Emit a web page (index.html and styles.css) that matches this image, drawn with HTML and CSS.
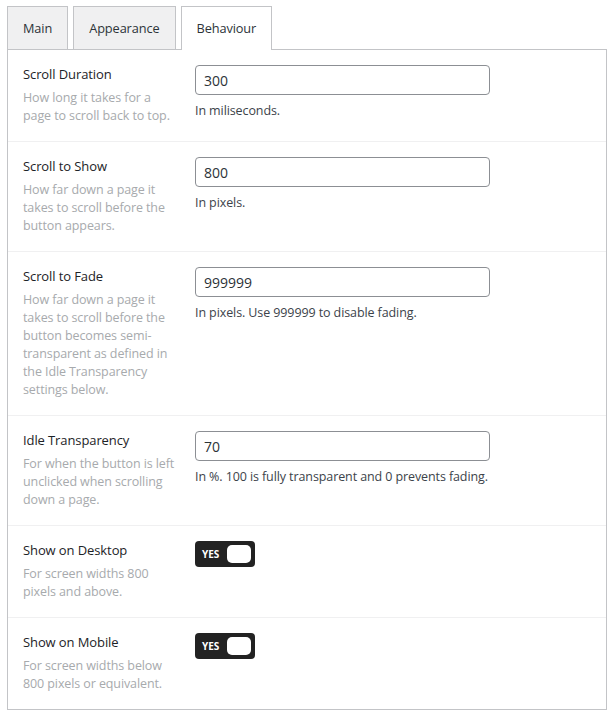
FILE: index.html
```html
<!doctype html>
<html lang="en">
<head>
    <meta charset="UTF-8">
    <title>Behaviour settings</title>
    <link rel="stylesheet" href="styles.css">
</head>
<body>
    <div class="wrap">
        <div class="tabs">
            <a class="tab">Main</a>
            <a class="tab">Appearance</a>
            <a class="tab active">Behaviour</a>
        </div>

        <div class="panel">
            <div class="row">
                <div class="info">
                    <div class="label">Scroll Duration</div>
                    <div class="desc">How long it takes for a page to scroll back to top.</div>
                </div>
                <div class="field">
                    <input type="text" class="input" value="300"/>
                    <div class="help">In miliseconds.</div>
                </div>
            </div>

            <div class="row">
                <div class="info">
                    <div class="label">Scroll to Show</div>
                    <div class="desc">How far down a page it takes to scroll before the button appears.</div>
                </div>
                <div class="field">
                    <input type="text" class="input" value="800"/>
                    <div class="help">In pixels.</div>
                </div>
            </div>

            <div class="row">
                <div class="info">
                    <div class="label">Scroll to Fade</div>
                    <div class="desc">How far down a page it takes to scroll before the button becomes semi-transparent as defined in the Idle Transparency settings below.</div>
                </div>
                <div class="field">
                    <input type="text" class="input" value="999999"/>
                    <div class="help">In pixels. Use 999999 to disable fading.</div>
                </div>
            </div>

            <div class="row">
                <div class="info">
                    <div class="label">Idle Transparency</div>
                    <div class="desc">For when the button is left unclicked when scrolling down a page.</div>
                </div>
                <div class="field">
                    <input type="text" class="input" value="70"/>
                    <div class="help">In %. 100 is fully transparent and 0 prevents fading.</div>
                </div>
            </div>

            <div class="row">
                <div class="info">
                    <div class="label">Show on Desktop</div>
                    <div class="desc">For screen widths 800 pixels and above.</div>
                </div>
                <div class="field">
                    <div class="toggle"><span class="toggle-text">YES</span><span class="knob"></span></div>
                </div>
            </div>

            <div class="row">
                <div class="info">
                    <div class="label">Show on Mobile</div>
                    <div class="desc">For screen widths below 800 pixels or equivalent.</div>
                </div>
                <div class="field">
                    <div class="toggle"><span class="toggle-text">YES</span><span class="knob"></span></div>
                </div>
            </div>
        </div>
    </div>
</body>
</html>
```

FILE: styles.css
```css
body {
    margin: 0;
    background: #ffffff;
    font-family: 'Open Sans', 'Noto Sans', sans-serif;
    font-size: 12.5px;
    letter-spacing: -0.1px;
    color: #1d2327;
}
.wrap {
    padding: 6px 2px 0 7px;
}
.tabs {
    display: flex;
    gap: 5px;
    margin-bottom: -1px;
}
.tab {
    display: block;
    height: 42px;
    line-height: 42px;
    padding: 0 15px;
    background: #f0f0f1;
    border: 1px solid #c3c4c7;
    border-bottom: none;
    color: #2c3338;
    font-weight: 500;
    font-size: 12.75px;
}
.tab.active {
    background: #ffffff;
    position: relative;
    z-index: 1;
    height: 43px;
}
.panel {
    border: 1px solid #c3c4c7;
    background: #ffffff;
}
.row {
    display: flex;
    gap: 15px;
    padding: 15px 15px 16px;
    border-top: 1px solid #f0f0f1;
}
.row:first-child {
    border-top: none;
}
.info {
    width: 157px;
    flex-shrink: 0;
}
.label {
    font-weight: 500;
    font-size: 13px;
    line-height: 18px;
    margin-bottom: 6px;
}
.desc {
    color: #a7aaad;
    line-height: 18px;
}
.field {
    flex: 1;
}
.input {
    display: block;
    box-sizing: border-box;
    width: 295px;
    height: 30px;
    margin: 0;
    padding: 0 8px;
    border: 1px solid #8c8f94;
    border-radius: 4px;
    font-family: inherit;
    font-size: 14px;
    color: #2c3338;
}
.help {
    margin-top: 7px;
    line-height: 18px;
    color: #3c434a;
}
.toggle {
    display: flex;
    align-items: center;
    justify-content: space-between;
    box-sizing: border-box;
    width: 60px;
    height: 26px;
    padding: 0 4px 0 7px;
    background: #222222;
    border-radius: 4px;
}
.toggle-text {
    color: #ffffff;
    font-size: 10px;
    font-weight: 700;
}
.knob {
    width: 24px;
    height: 18px;
    background: #ffffff;
    border-radius: 5px;
}
```
